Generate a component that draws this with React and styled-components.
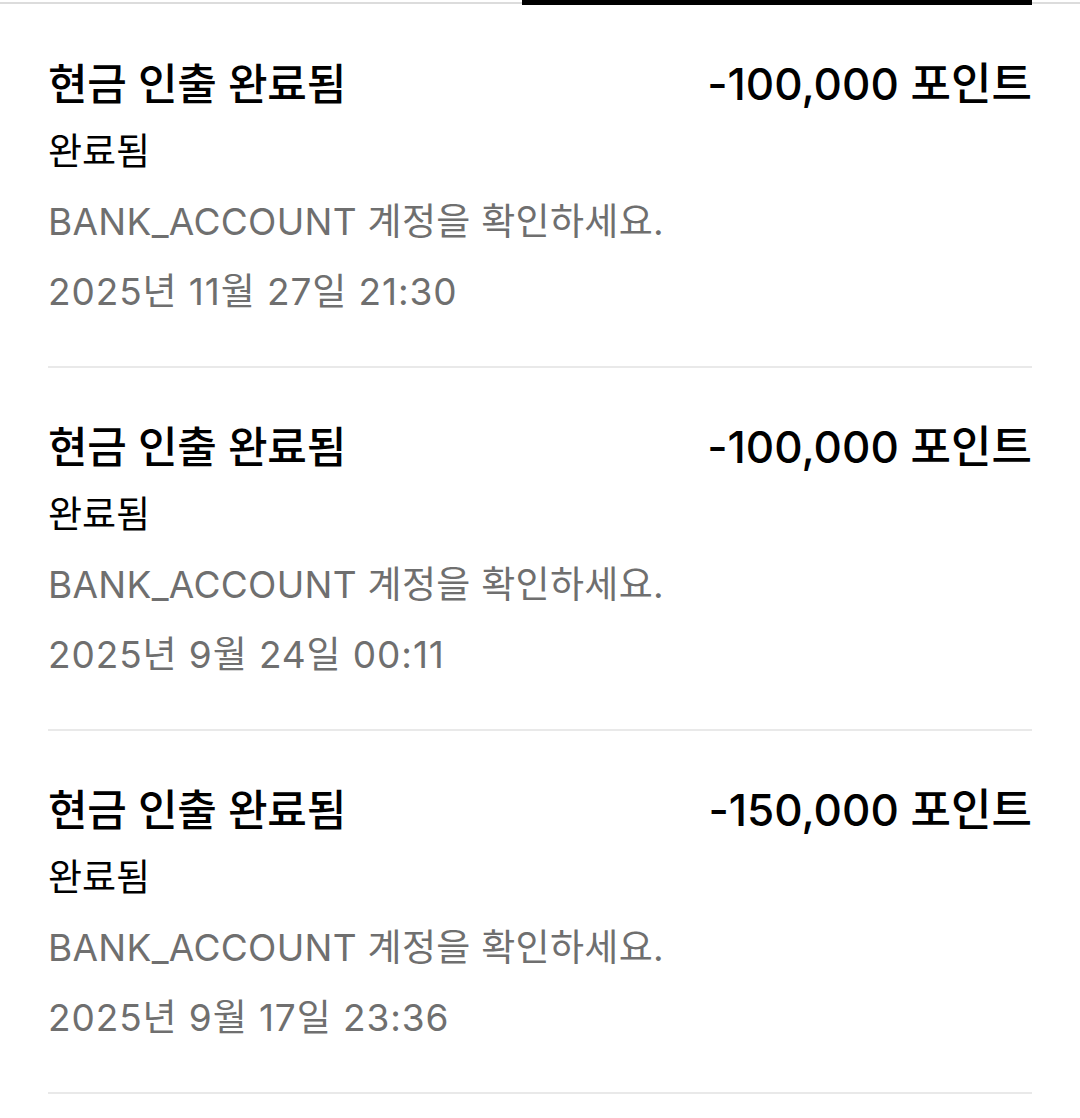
import React from 'react';
import styled, { createGlobalStyle } from 'styled-components';

const GlobalStyle = createGlobalStyle`
  html, body {
    margin: 0;
    padding: 0;
    background: #ffffff;
  }
  body {
    font-family: Inter, "Noto Sans CJK KR", sans-serif;
    -webkit-font-smoothing: antialiased;
  }
`;

const withdrawals = [
  { id: 1, amount: '-100,000 포인트', date: '2025년 11월 27일 21:30' },
  { id: 2, amount: '-100,000 포인트', date: '2025년 9월 24일 00:11' },
  { id: 3, amount: '-150,000 포인트', date: '2025년 9월 17일 23:36' },
];

const App = () => {
  return (
    <Page>
      <GlobalStyle />
      <TabStrip>
        <span />
        <Indicator />
      </TabStrip>
      <List>
        {withdrawals.map((item) => (
          <Item key={item.id}>
            <TopRow>
              <Title>현금 인출 완료됨</Title>
              <Amount>{item.amount}</Amount>
            </TopRow>
            <Status>완료됨</Status>
            <Meta>BANK_ACCOUNT 계정을 확인하세요.</Meta>
            <Meta $date>{item.date}</Meta>
          </Item>
        ))}
      </List>
    </Page>
  );
};

const Page = styled.div`
  width: 1080px;
  min-height: 1118px;
  background: #ffffff;
  color: #000000;
`;

const TabStrip = styled.div`
  display: grid;
  grid-template-columns: 522px 510px;
  height: 5px;
  background: linear-gradient(to bottom, transparent 2px, #dcdcdc 2px, #dcdcdc 4px, transparent 4px);
`;

const Indicator = styled.div`
  background: #000000;
  height: 5px;
`;

const List = styled.div`
  padding: 0 48px;
`;

const Item = styled.div`
  display: flex;
  flex-direction: column;
  padding: 40px 0 39px;
  border-bottom: 2px solid #e9e9e9;
`;

const TopRow = styled.div`
  display: flex;
  justify-content: space-between;
  align-items: center;
  height: 72px;
`;

const Title = styled.div`
  font-size: 43px;
  font-weight: 500;
  letter-spacing: -0.2px;
`;

const Amount = styled.div`
  font-size: 44px;
  font-weight: 500;
`;

const Status = styled.div`
  font-size: 37px;
  line-height: 70px;
  color: #000000;
`;

const Meta = styled.div`
  font-size: 37px;
  line-height: 70px;
  letter-spacing: ${(p) => (p.$date ? '0.9px' : '0.3px')};
  color: #6f6f6f;
`;

export default App;
